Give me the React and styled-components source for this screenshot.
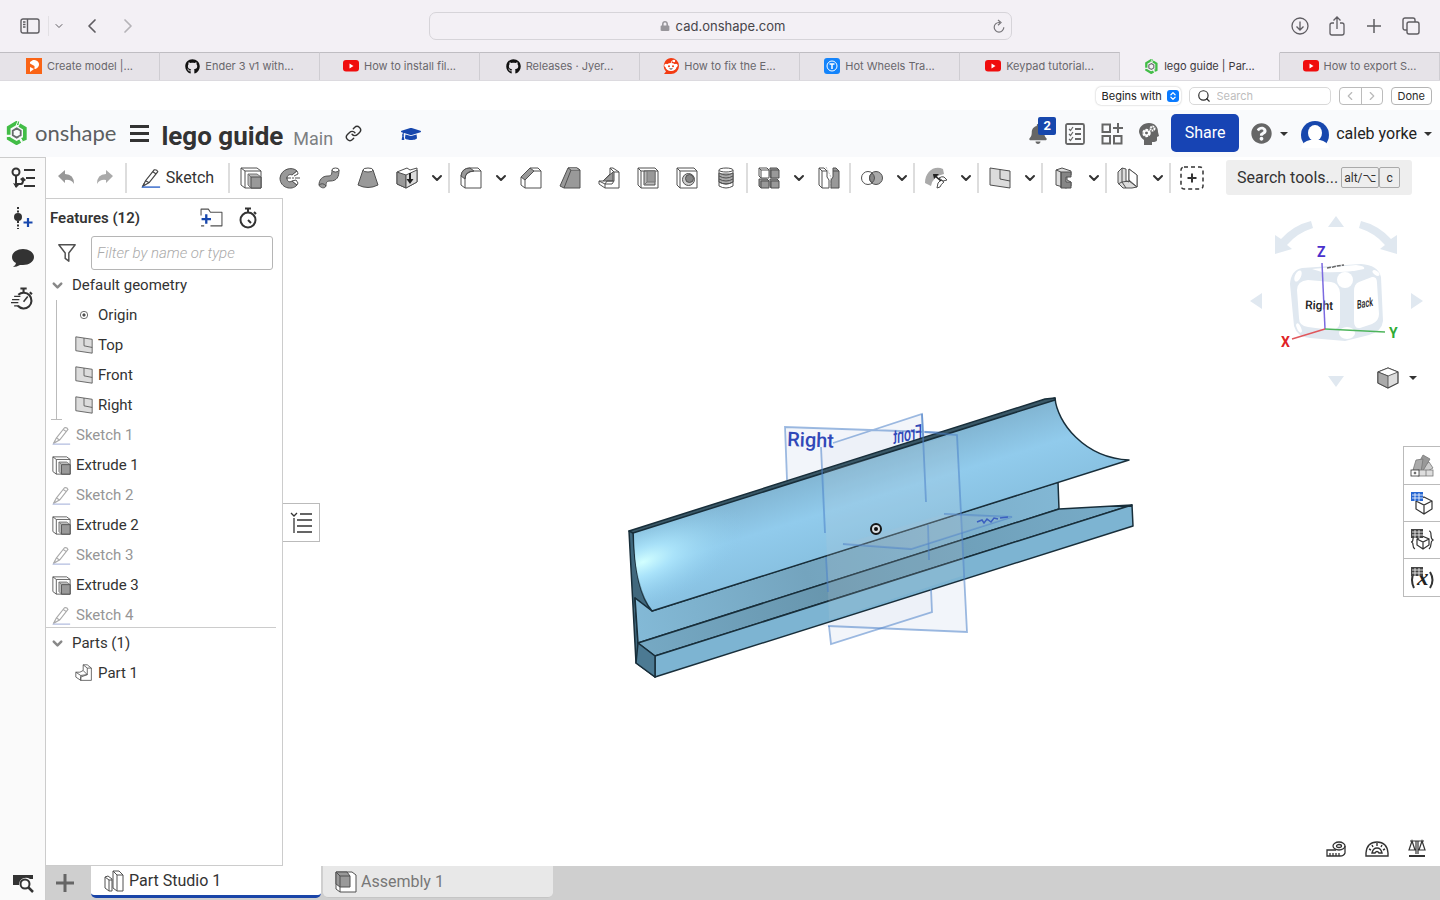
import { useState } from "react";
import styled, { createGlobalStyle } from "styled-components";
import { ChevronLeft, ChevronRight, ChevronDown, Link, Search, ChevronsUpDown } from "lucide-react";
import { FaGithub, FaBell, FaGraduationCap, FaQuestionCircle, FaLock } from "react-icons/fa";

const GlobalStyle = createGlobalStyle`
  * { box-sizing: border-box; }
  body {
    margin: 0;
    background: #fff;
    color: #333;
    font-family: Roboto, "Liberation Sans", sans-serif;
    font-size: 16px;
  }
  button {
    padding: 0;
    border: 0;
    background: none;
    color: inherit;
    font: inherit;
    cursor: pointer;
  }
  ul { list-style: none; margin: 0; padding: 0; }
  svg { display: block; flex-shrink: 0; }
`;

const Page = styled.div`
  display: flex;
  flex-direction: column;
  min-height: 100vh;
`;

/* ---------- browser ---------- */

const BrowserBar = styled.header`
  display: flex;
  align-items: center;
  justify-content: space-between;
  height: 52px;
  padding: 0 17px 0 18px;
  background: #f3f0f5;
  color: #5f5d62;
  font-family: Inter, "Liberation Sans", sans-serif;
`;

const BrowserGroup = styled.div`
  display: flex;
  flex: 1;
  align-items: center;
  justify-content: ${(props) => (props.$end ? "flex-end" : "flex-start")};
  gap: ${(props) => (props.$end ? "13px" : "12px")};
`;

const BrowserButton = styled.button`
  display: flex;
  align-items: center;
  justify-content: center;
  width: 24px;
  height: 28px;
  color: ${(props) => (props.$faded ? "#b5b3b8" : "#5f5d62")};
`;

const SmallMenu = styled(BrowserButton)`
  height: 20px;
  width: 20px;
  margin-left: -6px;
  border-left: 1px solid #e2e0e4;
`;

const AddressBar = styled.div`
  display: flex;
  align-items: center;
  width: 583px;
  height: 28px;
  padding-left: 28px;
  border: 1px solid #d6d4d9;
  border-radius: 7px;
  font-size: 13px;
  color: #47454a;
`;

const Address = styled.div`
  display: flex;
  flex: 1;
  align-items: center;
  justify-content: center;
  gap: 6px;
  svg { color: #98969b; }
`;

const TabStrip = styled.nav`
  display: flex;
  height: 29px;
  border-bottom: 1px solid #dcdadf;
  font-family: Inter, "Liberation Sans", sans-serif;
  font-size: 11px;
`;

const BrowserTab = styled.a`
  display: flex;
  flex: 1;
  align-items: center;
  justify-content: center;
  gap: 5px;
  padding-bottom: 1px;
  border-top: 1px solid ${(props) => (props.$active ? "#f3f0f5" : "#bfbdc2")};
  border-right: 1px solid #cfcdd2;
  background: ${(props) => (props.$active ? "#f3f0f5" : "#e6e3e8")};
  color: ${(props) => (props.$active ? "#3b393e" : "#69676c")};
  text-decoration: none;
  white-space: nowrap;
`;

const FindBar = styled.form`
  display: flex;
  align-items: center;
  justify-content: flex-end;
  gap: 8px;
  height: 29px;
  padding: 0 8px;
  background: #fff;
  color: #2b2b2b;
  font-family: Inter, "Liberation Sans", sans-serif;
  font-size: 11px;
`;

const MatchMode = styled.label`
  display: flex;
  position: relative;
  align-items: center;
  height: 18px;
  border-radius: 5px;
  box-shadow: 0 0 2px rgba(0, 0, 0, 0.3);
  select {
    appearance: none;
    width: 85px;
    height: 18px;
    padding: 0 18px 0 6px;
    border: 0;
    background: none;
    color: #222;
    font: inherit;
  }
`;

const Stepper = styled.span`
  display: flex;
  position: absolute;
  right: 2px;
  align-items: center;
  justify-content: center;
  width: 12px;
  height: 12px;
  border-radius: 3px;
  background: #0a7bff;
  color: #fff;
  pointer-events: none;
`;

const FindBox = styled.label`
  display: flex;
  align-items: center;
  gap: 6px;
  width: 142px;
  height: 18px;
  padding-left: 7px;
  border: 1px solid #d9d9d9;
  border-radius: 5px;
  input {
    width: 100px;
    padding: 0;
    border: 0;
    background: none;
    font: inherit;
    outline: 0;
  }
  input::placeholder { color: #bdbdbd; }
`;

const Segmented = styled.div`
  display: flex;
  height: 18px;
  border: 1px solid #bcbcbc;
  border-radius: 4px;
  color: #b9b9b9;
  button {
    display: flex;
    align-items: center;
    justify-content: center;
    width: 21px;
  }
  button + button { border-left: 1px solid #bcbcbc; }
`;

const DoneButton = styled.button`
  height: 18px;
  padding: 0 6px;
  border: 1px solid #b5b5b5;
  border-radius: 4px;
`;

/* ---------- document header ---------- */

const DocHeader = styled.header`
  display: flex;
  align-items: center;
  height: 47px;
  padding: 0 8px 0 5px;
  background: #f9fafc;
`;

const Brand = styled.a`
  display: flex;
  align-items: center;
  gap: 6px;
  height: 44px;
  padding-bottom: 2px;
  color: #5c5f61;
  font-family: Lato, "Liberation Sans", sans-serif;
  font-size: 22px;
  line-height: 24px;
  text-decoration: none;
`;

const Hamburger = styled.button`
  display: flex;
  flex-direction: column;
  gap: 4px;
  width: 19px;
  margin: 0 12px 0 14px;
  span { height: 3px; background: #333; }
`;

const DocTitle = styled.h1`
  margin: 4px 10px 0 0;
  font-size: 26px;
  font-weight: 700;
  line-height: 30px;
`;

const Workspace = styled.span`
  margin: 10px 2px 0 0;
  color: #7d7f82;
  font-size: 18px;
  line-height: 22px;
`;

const HeaderButton = styled.button`
  display: flex;
  position: relative;
  align-items: center;
  justify-content: center;
  width: 37px;
  height: 30px;
  color: ${(props) => props.$color || "#666"};
`;

const HatButton = styled(HeaderButton)`
  margin-left: 20px;
`;

const HeaderTools = styled.div`
  display: flex;
  align-items: center;
  margin-left: auto;
`;

const Badge = styled.span`
  position: absolute;
  top: -2px;
  right: 0;
  width: 18px;
  height: 18px;
  border-radius: 2px;
  background: #1747ad;
  color: #fff;
  font-size: 13px;
  font-weight: 700;
  line-height: 18px;
`;

const ShareButton = styled.button`
  width: 68px;
  height: 38px;
  margin: 0 4px 2px;
  border-radius: 5px;
  background: #1744b4;
  color: #fff;
  font-size: 16px;
`;

const Account = styled.button`
  display: flex;
  align-items: center;
  gap: 7px;
  margin-left: 13px;
  color: #222;
`;

const Caret = styled.span`
  border: 4px solid transparent;
  border-top-color: #333;
  border-bottom: 0;
`;

/* ---------- workspace ---------- */

const Body = styled.div`
  display: flex;
  flex: 1;
`;

const Rail = styled.nav`
  display: flex;
  flex-direction: column;
  width: 46px;
  border-top: 1px solid #ccc;
  border-right: 1px solid #ccc;
  background: #fafafa;
`;

const RailButton = styled.button`
  display: flex;
  align-items: center;
  justify-content: center;
  height: 40px;
  ${(props) => props.$last && "margin-top: auto; height: 34px;"}
`;

const Studio = styled.div`
  display: flex;
  flex: 1;
  flex-direction: column;
  min-width: 0;
`;

const Toolbar = styled.div`
  display: flex;
  align-items: center;
  height: 41px;
`;

const ToolButton = styled.button`
  display: flex;
  align-items: center;
  justify-content: center;
  width: 39px;
  height: 36px;
`;

const MoreButton = styled(ToolButton)`
  width: 21px;
`;

const SketchButton = styled(ToolButton)`
  gap: 5px;
  width: 99px;
`;

const Divider = styled.span`
  width: 2px;
  height: 30px;
  margin: 0 1px;
  background: #ddd;
`;

const ToolSearch = styled.button`
  display: flex;
  align-items: center;
  height: 35px;
  margin-left: 15px;
  padding: 0 12px 0 11px;
  border-radius: 3px;
  background: #eee;
  white-space: nowrap;
`;

const Key = styled.kbd`
  height: 21px;
  padding: 0 ${(props) => (props.$wide ? "2px" : "6px")};
  border: 1px solid #aaa;
  border-radius: 2px;
  font-family: Roboto, "DejaVu Sans", sans-serif;
  font-size: 12px;
  line-height: 20px;
  &:first-of-type { margin-left: 3px; }
`;

const Main = styled.main`
  display: flex;
  flex: 1;
`;

const FeaturePanel = styled.aside`
  width: 237px;
  border-top: 1px solid #ccc;
  border-right: 1px solid #ccc;
  border-bottom: 1px solid #ccc;
  font-size: 15px;
`;

const PanelHead = styled.div`
  display: flex;
  align-items: center;
  height: 37px;
  padding: 0 24px 0 4px;
  h2 {
    flex: 1;
    margin: 0;
    font-size: 15px;
    font-weight: 600;
  }
  button + button { margin-left: 13px; }
`;

const FilterRow = styled.label`
  display: flex;
  align-items: center;
  gap: 14px;
  padding: 0 10px 0 11px;
  input {
    width: 182px;
    height: 34px;
    padding: 0 5px;
    border: 1px solid #b5b5b5;
    border-radius: 3px;
    font: inherit;
    outline: 0;
  }
  input::placeholder {
    color: #aaa;
    font-style: italic;
    font-weight: 300;
  }
`;

const FeatureList = styled.ul`
  max-height: 358px;
  margin-right: 6px;
  overflow: hidden;
  border-bottom: 1px solid #ccc;
`;

const Row = styled.li`
  display: flex;
  align-items: center;
  gap: 5px;
  height: 30px;
  padding-left: ${(props) => (props.$nested ? "18px" : "6px")};
  color: ${(props) => (props.$muted ? "#969696" : "#333")};
`;

const Fold = styled.button`
  display: flex;
  align-items: center;
  gap: 7px;
  height: 30px;
  padding-left: 4px;
`;

const Branch = styled.ul`
  position: relative;
  margin-left: 10px;
  border-left: ${(props) => (props.$line ? "1px solid #bbb" : "1px solid transparent")};
  &::after {
    content: "";
    display: ${(props) => (props.$line ? "block" : "none")};
    position: absolute;
    bottom: 0;
    left: -6px;
    width: 11px;
    height: 1px;
    background: #bbb;
  }
`;

const Viewport = styled.section`
  display: flex;
  position: relative;
  flex: 1;
  min-width: 0;
  overflow: hidden;
`;

const Scene = styled.svg`
  flex: 1;
  width: 100%;
  min-width: 0;
`;

const ListToggle = styled.button`
  display: flex;
  position: absolute;
  top: 305px;
  left: -1px;
  align-items: center;
  justify-content: center;
  width: 38px;
  height: 39px;
  border: 1px solid #bbb;
  border-left-color: #fff;
  background: #fff;
`;

const CubeArea = styled.div`
  position: absolute;
  top: 7px;
  right: 0;
`;

const ViewMenu = styled.button`
  display: flex;
  position: absolute;
  right: 23px;
  bottom: 6px;
  align-items: center;
  gap: 10px;
`;

const SideTabs = styled.div`
  display: flex;
  position: absolute;
  top: 248px;
  right: 0;
  flex-direction: column;
  border: 1px solid #bbb;
  border-right: 0;
  background: #fff;
  button {
    display: flex;
    align-items: center;
    justify-content: center;
    width: 36px;
    height: 38px;
  }
  button + button { border-top: 1px solid #bbb; }
  button:not(:last-child) { height: 37px; }
`;

const MeasureBar = styled.div`
  display: flex;
  position: absolute;
  right: 14px;
  bottom: 7px;
  gap: 19px;
`;

const StudioTabs = styled.nav`
  display: flex;
  height: 34px;
  background: #cfcfcf;
`;

const AddTab = styled.button`
  display: flex;
  align-items: center;
  justify-content: center;
  width: 45px;
  padding-right: 7px;
  color: #666;
`;

const StudioTab = styled.button`
  display: flex;
  align-items: center;
  gap: 4px;
  width: 230px;
  height: 32px;
  margin-right: 2px;
  padding-left: 12px;
  border-bottom: ${(props) => (props.$active ? "3px solid #1a45a8" : "1px solid #c5c5c5")};
  border-radius: 0 0 5px 5px;
  background: ${(props) => (props.$active ? "#fff" : "#e8e8e8")};
  color: ${(props) => (props.$active ? "#333" : "#777")};
`;

/* ---------- icons ---------- */

const ink = "#505050";

function Icon({ size = 22, children }) {
  return (
    <svg width={size} height={size} viewBox="0 0 22 22" fill="none" stroke={ink} strokeWidth="1" strokeLinejoin="round" aria-hidden="true">
      {children}
    </svg>
  );
}

function OnshapeMark({ size }) {
  return (
    <svg width={size} height={size} viewBox="0 0 24 26" fill="none" strokeWidth="4" aria-hidden="true">
      <path d="M14 2.500L11.500 2 3 7v8" stroke="#42bd47" />
      <path d="M3 17v2l8.500 5 4-2.300" stroke="#42bd47" />
      <path d="M14.500 4.500L20.500 8v11l-3.500 1.500" stroke="#42bd47" />
      <path d="M11.700 8l4.300 2.500v5l-4.300 2.500-4.300-2.500v-5z" stroke="#686b6d" strokeWidth="2" />
      <path d="M13 0l-2 5M1 17l5-1M18 22l-3-5" stroke="#fff" strokeWidth="1" />
    </svg>
  );
}

const YoutubeMark = () => (
  <svg width="16" height="12" viewBox="0 0 16 12" aria-hidden="true">
    <rect width="16" height="11.500" rx="3" fill="#f00d0d" />
    <path d="M6.500 3.500v5l4-2.500z" fill="#fff" />
  </svg>
);

const PrintablesMark = () => (
  <svg width="16" height="16" viewBox="0 0 16 16" aria-hidden="true">
    <rect width="16" height="16" fill="#fa6416" />
    <path d="M4 4l3-2c4 0 6 2 6 4.500S10.500 11 8.500 11V8L4 5.500z" fill="#fff" />
    <path d="M4 9l4 2-4 3z" fill="#fff" />
  </svg>
);

const RedditMark = () => (
  <svg width="16" height="16" viewBox="0 0 16 16" aria-hidden="true">
    <path d="M8 0a8 8 0 110 16H1l2-2.500A8 8 0 018 0z" fill="#f33b12" />
    <circle cx="3" cy="7.500" r="1.700" fill="#fff" />
    <circle cx="13" cy="7.500" r="1.700" fill="#fff" />
    <circle cx="11" cy="3" r="1.200" fill="#fff" />
    <path d="M8 5.500L9 2.800l2 .3" stroke="#fff" strokeWidth=".8" fill="none" />
    <ellipse cx="8" cy="9" rx="5.500" ry="4" fill="#fff" />
    <circle cx="6" cy="8.300" r="1" fill="#f33b12" />
    <circle cx="10" cy="8.300" r="1" fill="#f33b12" />
    <path d="M6 10.500h4q-2 2.200-4 0z" fill="#222" />
  </svg>
);

const ThingMark = () => (
  <svg width="16" height="16" viewBox="0 0 16 16" aria-hidden="true">
    <rect width="16" height="16" rx="3" fill="#1484fb" />
    <circle cx="8" cy="8" r="5" fill="none" stroke="#fff" />
    <path d="M5.500 6h5M8 6v5" stroke="#fff" strokeWidth="1.500" />
  </svg>
);

const SketchIcon = ({ size, faded }) => (
  <svg width={size} height={size} viewBox="0 0 22 22" fill="none" stroke={faded ? "#aaa" : "#444"} strokeWidth="1.300" aria-hidden="true">
    <path d="M2 20l3-6L14.500 2q3-.5 4 2L9 16z" />
    <path d="M5 14l4 2.200M13 4l3.700 2.500M2 20l1.500-3" />
    <path d="M1 21h20" stroke={faded ? "#b5bfe0" : "#2a60c8"} strokeWidth="1.500" />
  </svg>
);

const ExtrudeIcon = ({ size }) => (
  <Icon size={size}>
    <path d="M1 1h16l4 3v17H5l-4-3z" fill="#fff" />
    <path d="M1 1l4 3h16M5 4v17" />
    <path d="M8 7h9l4 3v11H11l-3-3z" fill="#bbb" stroke="#777" />
    <path d="M11 10h10v11H11z" fill="#999" />
    <path d="M8 7l3 3" stroke="#777" />
  </Icon>
);

const RevolveIcon = () => (
  <Icon>
    <path d="M18 4C13-1 2 2 1 11c0 10 12 13 17 7l-5-4c-3 2-5 0-5-3s3-4 5-3z" fill="#999" />
    <path d="M13 8l5-4q1 2 1 3l-4 2M13 14l4-1 2 3-1 2z" fill="#fff" />
    <path d="M7 11h14" strokeDasharray="5 1 2 1" />
  </Icon>
);

const SweepIcon = () => (
  <Icon>
    <path d="M14 3c0 5-1 6-4 6-6 0-9 4-9 9 1 3 6 4 7 1 0-4 1-5 4-5 7 0 9-4 9-11z" fill="#999" />
    <ellipse cx="17.500" cy="3" rx="3.500" ry="2" fill="#fff" />
    <path d="M1 18q4-3 7 1" />
  </Icon>
);

const LoftIcon = () => (
  <Icon>
    <path d="M6 3L1 18q10 5 20 0L16 3z" fill="#999" />
    <ellipse cx="11" cy="3" rx="5" ry="2" fill="#fff" />
  </Icon>
);

const ThickenIcon = () => (
  <Icon>
    <path d="M1 5l10-4 3 2 7-2v14l-11 6-9-4z" fill="#fff" />
    <path d="M1 5l9 3v13l-9-4z" fill="#999" />
    <path d="M10 8l11-5v12l-11 6z" fill="#ddd" />
    <path d="M14 6v8" stroke="#222" strokeWidth="2" />
    <path d="M10.500 12h7L14 17z" fill="#222" stroke="none" />
  </Icon>
);

const FilletIcon = () => (
  <Icon>
    <path d="M1 9Q2 1 10 1h8l3 3v17H5l-4-3z" fill="#fff" />
    <path d="M1 9Q2 1 10 1l4 3q-9 1-9 8z" fill="#999" />
    <path d="M5 21v-9q0-8 9-8h7" />
  </Icon>
);

const ChamferIcon = () => (
  <Icon>
    <path d="M1 10l9-9h8l3 3v17H5l-4-3z" fill="#fff" />
    <path d="M1 10l9-9 4 3-9 9z" fill="#999" />
    <path d="M5 21v-8l9-9h7" />
  </Icon>
);

const DraftIcon = () => (
  <Icon>
    <path d="M9 1h9l3 2v18H5l-4-2z" fill="#999" />
    <path d="M9 1h9l3 2h-9z" fill="#fff" />
    <path d="M12 3L5 21" />
  </Icon>
);

const RibIcon = () => (
  <Icon>
    <path d="M12 1h3l6 4v16H7l-6-4v-3h4l7-7z" fill="#fff" />
    <path d="M5 14L15 5v9z" fill="#999" />
    <path d="M12 1l4 4h5M16 5v9H9l-2 3v4M1 14l6 3h7l2-3" />
  </Icon>
);

const ShellIcon = () => (
  <Icon>
    <path d="M1 1h17l3 3v17H4l-3-3z" fill="#fff" />
    <path d="M1 1l3 3h17M4 4v17" />
    <path d="M7 4h11v14H7z" fill="#bbb" />
    <path d="M10 4h8v11h-8z" fill="#999" stroke="#777" />
    <path d="M7 18l3-3" stroke="#777" />
  </Icon>
);

const HoleIcon = () => (
  <Icon>
    <path d="M1 1h17l3 3v17H4l-3-3z" fill="#fff" />
    <path d="M1 1l3 3h17M4 4v17" />
    <circle cx="12.500" cy="12.500" r="6" fill="#ccc" />
    <circle cx="13.500" cy="11.500" r="4" fill="#858585" />
  </Icon>
);

const ThreadIcon = () => (
  <Icon>
    <path d="M4 3v16q7 4 14 0V3" fill="#fff" />
    <path d="M4 6v9q7 4 14 0V6" fill="#aaa" />
    <ellipse cx="11" cy="3" rx="7" ry="2" fill="#fff" />
    <path d="M4 6q7 4 14 0M4 9q7 4 14 0M4 12q7 4 14 0M4 15q7 4 14 0" />
  </Icon>
);

const PatternIcon = () => (
  <Icon>
    <path d="M1 1h8l2 2v8H3L1 9z" fill="#fff" />
    <path d="M12 1h7l2 2v8h-8l-1-2zM1 12h8l2 2v7H3l-2-2zM12 12h7l2 2v7h-8l-1-2z" fill="#999" />
    <path d="M1 1l2 2h8M3 3v8M13 3h8M13 3v8M3 14h8M3 14v7M13 14h8M13 14v7" />
  </Icon>
);

const MirrorIcon = () => (
  <Icon>
    <path d="M1 1h5l3 3v6l2 3v8H4l-3-3z" fill="#fff" />
    <path d="M1 1l3 3h5M4 4v17" />
    <path d="M8 0l5 10v12" stroke="#bbb" strokeDasharray="2 1" />
    <path d="M21 4v17h-8v-8l2-3V1h3z" fill="#999" />
    <path d="M15 4h6" />
  </Icon>
);

const BooleanIcon = () => (
  <Icon>
    <circle cx="7" cy="11" r="6.500" fill="#fff" />
    <circle cx="15" cy="11" r="6.500" fill="#aaa" />
    <path d="M11 6q-5 5 0 10 5-5 0-10z" fill="#888" />
  </Icon>
);

const SurfaceIcon = () => (
  <Icon>
    <path d="M0 16C0 5 9-2 18 2l1 5Q8 9 6 19z" fill="#aaa" stroke="none" />
    <path d="M12 21q0-6 4-8l3 2q-3 2-4 5zM14 11q3-2 5-1l3 3-4 1z" fill="#fff" />
    <path d="M9 8l7 6" stroke="#222" strokeWidth="1.600" />
    <path d="M8 7h6l-5 5z" fill="#222" stroke="none" />
  </Icon>
);

const PlaneIcon = ({ size }) => (
  <Icon size={size}>
    <path d="M1 1l20 3v17L1 18z" fill="#dcdcdc" />
    <path d="M11 2.500V12l10 2" />
  </Icon>
);

const FrameIcon = () => (
  <Icon>
    <path d="M3 3l6-2 9 3v4l-4 1v4l4 2v4l-5 2-10-3z" fill="#ddd" />
    <path d="M8 5h10v5h-5v5h5v6H8z" fill="#858585" />
    <path d="M3 3l5 2v16" />
  </Icon>
);

const SheetIcon = () => (
  <Icon>
    <path d="M1 5l4-4 4 1v12l3 1V2l8 6v12l-5 1H6l-5-5z" fill="#ddd" />
    <path d="M12 2l8 6v12l-8-7z" fill="#fff" />
    <path d="M5 1v14l-4 2M5 15l7-1 8 6M5 15l4 6" />
  </Icon>
);

const AddToolIcon = () => (
  <svg width="24" height="24" viewBox="0 0 24 24" fill="none" stroke="#333" aria-hidden="true">
    <rect x="1" y="1" width="22" height="22" rx="3" strokeWidth="1.500" strokeDasharray="4 3" />
    <path d="M12 7.500v9M7.500 12h9" strokeWidth="2" />
  </svg>
);

const UndoIcon = ({ flip }) => (
  <svg width="18" height="18" viewBox="0 0 18 18" fill={flip ? "#aaa" : "#999"} aria-hidden="true">
    <path d={flip ? "M17 7l-7-6v4Q1 5 1 15q3-5 9-4v3z" : "M1 7l7-6v4q9 0 9 10-3-5-9-4v3z"} />
  </svg>
);

const StopwatchIcon = ({ speed, size = 22 }) => (
  <svg width={size} height={size} viewBox="0 0 22 22" fill="none" stroke="#333" strokeWidth="2" aria-hidden="true">
    {speed ? <path d="M7 7.500a7.500 7.500 0 11-.5 10.500" /> : <circle cx="12" cy="13" r="7.500" />}
    <path d="M9 1.500h6M12 2v3M18 5l2 2" />
    {speed ? <path d="M12 14l4-5" strokeWidth="1.500" /> : <path d="M12 13l3 3" strokeWidth="2" />}
    {speed && <path d="M3 9h6M1 12h7M0 15h7M3 18h4" strokeWidth="1.200" />}
  </svg>
);

const PartIcon = () => (
  <Icon size={18}>
    <path d="M10 1h5l5 4v15H7l-6-4v-6h5l4-2z" fill="#fff" />
    <path d="M10 1l5 4h5M15 5v8l-8 3v4M1 10l6 4v6M7 14l8-1M10 8l5 5" />
  </Icon>
);

const PartStudioIcon = () => (
  <Icon>
    <path d="M2 7l3-1 4 3v12H6l-4-3z" fill="#fff" />
    <path d="M10 1h6l4 4v16h-6l-4-3z" fill="#fff" />
    <path d="M2 7l4 3v11M6 10h3M10 1l4 4v16M14 5h6" />
  </Icon>
);

const AssemblyIcon = () => (
  <Icon>
    <path d="M1 1h16l4 3v17H5l-4-3z" fill="#fff" />
    <path d="M1 1h11l3 4v11H5l-4-3z" fill="#999" />
    <path d="M1 1l4 4h10M5 5v16" />
  </Icon>
);

const HouseCube = () => (
  <svg width="22" height="22" viewBox="0 0 22 22" strokeLinejoin="round" stroke="#444" aria-hidden="true">
    <path d="M11 1l10 4v11l-10 5-10-5V5z" fill="#ddd" strokeWidth="1.300" />
    <path d="M1 5l10 4 10-4-10-4z" fill="#fff" strokeWidth=".8" />
    <path d="M11 9v12L1 16V5z" fill="#aaa" strokeWidth=".8" />
  </svg>
);

const Grid = ({ color }) => (
  <g>
    <path d="M1 1h12v9H1z" fill={color} stroke="none" />
    <path d="M2 4h11M2 7h11M5 2v8M9 2v8" stroke="#fff" strokeWidth=".8" />
  </g>
);

const SwatchIcon = () => (
  <svg width="24" height="24" viewBox="0 0 24 24" fill="#aaa" stroke="#777" strokeWidth=".8" aria-hidden="true">
    <path d="M6 16L19 8l4 6-12 7z" fill="#ccc" />
    <path d="M5 16L13 1l7 4-9 15z" fill="#999" />
    <path d="M3 16L6 6l7-1-2 13z" fill="#aaa" />
    <rect x="8" y="16" width="15" height="6" fill="#ddd" />
    <path d="M16 16v6" />
    <rect x="1" y="16" width="8" height="6" fill="#fff" stroke="#333" />
    <circle cx="5" cy="19" r="1" fill="#333" />
  </svg>
);

const TableCubeIcon = ({ color, braces }) => (
  <svg width="24" height="24" viewBox="0 0 24 24" fill="none" stroke="#333" strokeWidth="1.200" aria-hidden="true">
    {braces ? (
      <g>
        <path d="M5 8q-2 0-2 3t-2 3q2 0 2 3t2 4M19 3q2 0 2 4t2 5q-2 1-2 4t-2 5" />
        <path d="M12 8l7 3v6l-6 4-6-4v-6zM7 11l6 3 6-3M13 14v7" fill="#fff" />
      </g>
    ) : (
      <path d="M14 6l8 4v8l-8 5-8-5v-8zM6 10l8 4 8-4M14 14v9" fill="#fff" />
    )}
    <Grid color={color} />
  </svg>
);

const VariableIcon = () => (
  <svg width="24" height="24" viewBox="0 0 24 24" fill="none" stroke="#333" aria-hidden="true">
    <text x="7" y="19" fill="#222" stroke="none" fontFamily="Liberation Serif, serif" fontSize="23" fontStyle="italic" fontWeight="700">x</text>
    <path d="M4 6q-4 8 0 16M20 6q5 8 0 16" strokeWidth="2" />
    <Grid color="#444" />
  </svg>
);

/* ---------- scene ---------- */

const edge = { stroke: "#182e3a", strokeWidth: 1.5, strokeLinejoin: "round" };
const planeEdge = { fill: "none", stroke: "#4d82c8", strokeOpacity: 0.55, strokeWidth: 1.8 };

function Model() {
  return (
    <Scene viewBox="283 198 1157 668" preserveAspectRatio="xMidYMid meet" role="img" aria-label="Part 1">
      <defs>
        <linearGradient id="lip" gradientUnits="userSpaceOnUse" x1="840" y1="462" x2="866" y2="546">
          <stop offset="0" stopColor="#80b3d0" />
          <stop offset="0.5" stopColor="#91cbec" />
          <stop offset="1" stopColor="#88c1e1" />
        </linearGradient>
        <radialGradient id="shine" gradientUnits="userSpaceOnUse" cx="0" cy="0" r="1" gradientTransform="translate(643 562) rotate(-22) scale(110 46)">
          <stop offset="0" stopColor="#d2ffff" />
          <stop offset="0.3" stopColor="#b0e9fe" stopOpacity="0.8" />
          <stop offset="1" stopColor="#8ccbec" stopOpacity="0" />
        </radialGradient>
        <linearGradient id="wall" gradientUnits="userSpaceOnUse" x1="636" y1="620" x2="1058" y2="495">
          <stop offset="0" stopColor="#83b9d6" />
          <stop offset="0.4" stopColor="#74a4be" />
          <stop offset="1" stopColor="#82b7d4" />
        </linearGradient>
        <linearGradient id="ledge" gradientUnits="userSpaceOnUse" x1="640" y1="650" x2="1110" y2="505">
          <stop offset="0" stopColor="#76a9c4" />
          <stop offset="0.4" stopColor="#6896ae" />
          <stop offset="1" stopColor="#77abc7" />
        </linearGradient>
      </defs>

      {/* planes behind the part */}
      <path d="M785 427L957 433 967 632 795 625z" fill="#e9eef6" fillOpacity="0.6" />
      <path d="M821 447L922 414 932 612 831 644z" fill="#e9eef6" fillOpacity="0.6" />
      <path d="M787 480L785 427 957 433M833 443L922 414 924 450" {...planeEdge} />
      <text x="787" y="446" fill="#3048b8" fontSize="20" fontWeight="500" transform="rotate(2 787 446)">Right</text>
      <text transform="matrix(-0.62 0.13 0 1 922 438)" fill="#3048b8" fontSize="20" fontWeight="500">Front</text>

      {/* part */}
      <path d="M629 531L633 531 652 611 635 598 638 643 655 656 655 677 636 663z" fill="#41687d" {...edge} />
      <path d="M635 598L652 611 1058 482 1059 509 638 643z" fill="url(#wall)" {...edge} />
      <path d="M638 643L1059 509 1132 505 655 656z" fill="url(#ledge)" {...edge} />
      <path d="M655 656L1132 505 1133 526 655 677z" fill="#7db4d2" {...edge} />
      <path d="M638 643L655 656 655 677 636 663z" fill="#4c7a93" {...edge} />
      <path d="M633 531L1055 398C1057 422 1084 458 1129 460L652 611C638 595 634 560 633 531z" fill="url(#lip)" {...edge} />
      <path d="M634 532L800 480V562L652 610C638 595 634 560 634 532z" fill="url(#shine)" />
      <path d="M629 531L1045 399 1055 398 1055 400 633 533z" fill="#3a5867" {...edge} />

      {/* planes in front of the part */}
      <path d="M824 472L956 434 965 575 829 620z" fill="#c3cdd6" fillOpacity="0.16" />
      <path d="M821 447L825 533M826 557L828 592M829 626L831 644 932 612 931 589M922 414L926 502M928 525L929 560" {...planeEdge} />
      <path d="M925 432L957 435 967 632 828 626" {...planeEdge} />
      <path d="M843 544L911 549 1012 517 944 514" {...planeEdge} />
      <path d="M843 544L911 549 1012 517 944 514z" fill="#b4c2cd" fillOpacity="0.15" />
      <path d="M977 522l5-2 2 3 3-4 4 3 3-4 4 1M1000 518l8-1" stroke="#3b5fc0" strokeWidth="1.500" fill="none" />
      <circle cx="876" cy="529" r="5" fill="#d9dde0" stroke="#151515" strokeWidth="2" />
      <circle cx="876" cy="529" r="2" fill="#111" />
    </Scene>
  );
}

function ViewCube() {
  return (
    <svg width="210" height="190" viewBox="0 0 210 190" aria-hidden="true">
      <g fill="#e0e8f0">
        <path d="M106 11l8 11H98zM98 171h16l-8 11zM20 96l12-8v16zM193 96l-12-8v16z" />
        <path d="M81 16l2 7Q67 28 57 40l5 4-17 5V30l6 4Q64 20 81 16z" />
        <path d="M131 16l-2 7q16 5 26 17l-5 4 17 5V30l-6 4Q148 20 131 16z" />
        <path d="M72 63L131 59Q148 60 151 72L153 116Q152 126 139 130L115 136 80 133Q67 132 64 121L60 79Q61 65 72 63z" />
      </g>
      <g fill="#fff">
        <path d="M78 75L101 77Q109 78 110 88V117Q109 125 101 125L78 122Q69 121 69 113L67 85Q67 76 78 75z" />
        <path d="M129 77L142 72Q147 71 147 78L149 109Q149 116 142 119L130 123Q124 124 124 116V86Q124 79 129 77z" />
        <path d="M82 64L126 60Q136 61 134 64 116 68 92 67z" />
        <circle cx="115" cy="75" r="8" />
        <ellipse cx="117" cy="128" rx="8" ry="6" />
        <ellipse cx="68" cy="71" rx="3" ry="6" transform="rotate(25 68 71)" />
        <ellipse cx="69" cy="123" rx="2" ry="5" transform="rotate(-25 69 123)" />
        <ellipse cx="146" cy="68" rx="4" ry="2" transform="rotate(35 146 68)" />
      </g>
      <path d="M97 63l6-1 4-1 7-1" stroke="#666" strokeWidth="1.500" strokeDasharray="4 1" fill="none" />
      <g fontSize="12" fontWeight="500" fill="#222">
        <text x="75" y="104" transform="rotate(2 75 104)">Right</text>
        <text x="0" y="0" fontSize="12" transform="matrix(0.6 -0.120 0 1 127 104)">Back</text>
      </g>
      <path d="M92 58L95 124" stroke="#7b6ae0" strokeWidth="1.500" />
      <path d="M95 124L62 134" stroke="#e0575c" strokeWidth="1.500" />
      <path d="M95 124L155 127" stroke="#4eb55c" strokeWidth="1.500" />
      <g fontSize="14" fontWeight="700">
        <text x="87" y="52" fill="#4a31cc">Z</text>
        <text x="51" y="142" fill="#e02226">X</text>
        <text x="159" y="133" fill="#2eab35">Y</text>
      </g>
    </svg>
  );
}

/* ---------- data ---------- */

const browserTabs = [
  { title: "Create model |...", icon: <PrintablesMark /> },
  { title: "Ender 3 v1 with...", icon: <FaGithub size={15} color="#111" /> },
  { title: "How to install fil...", icon: <YoutubeMark /> },
  { title: "Releases · Jyer...", icon: <FaGithub size={15} color="#111" /> },
  { title: "How to fix the E...", icon: <RedditMark /> },
  { title: "Hot Wheels Tra...", icon: <ThingMark /> },
  { title: "Keypad tutorial...", icon: <YoutubeMark /> },
  { title: "lego guide | Par...", icon: <OnshapeMark size={15} />, active: true },
  { title: "How to export S...", icon: <YoutubeMark /> },
];

const toolGroups = [
  [["Extrude", ExtrudeIcon], ["Revolve", RevolveIcon], ["Sweep", SweepIcon], ["Loft", LoftIcon], ["Thicken", ThickenIcon], ["More solids"]],
  [["Fillet", FilletIcon], ["More fillets"], ["Chamfer", ChamferIcon], ["Draft", DraftIcon], ["Rib", RibIcon], ["Shell", ShellIcon], ["Hole", HoleIcon], ["Thread", ThreadIcon]],
  [["Linear pattern", PatternIcon], ["More patterns"], ["Mirror", MirrorIcon]],
  [["Boolean", BooleanIcon], ["More booleans"]],
  [["Surface", SurfaceIcon], ["More surfaces"]],
  [["Plane", PlaneIcon], ["More planes"]],
  [["Frame", FrameIcon], ["More frames"]],
  [["Sheet metal", SheetIcon], ["More sheet metal"]],
  [["Add tool", AddToolIcon]],
];

const features = ["Sketch 1", "Extrude 1", "Sketch 2", "Extrude 2", "Sketch 3", "Extrude 3", "Sketch 4"];

function Browser() {
  return (
    <>
      <BrowserBar>
        <BrowserGroup>
          <BrowserButton aria-label="Sidebar">
            <svg width="20" height="16" viewBox="0 0 20 16" fill="none" stroke="currentColor" strokeWidth="1.400">
              <rect x="1" y="1" width="18" height="14" rx="2" />
              <path d="M7.500 1v14M3 4h2.500M3 6.500h2.500M3 9h2.500" />
            </svg>
          </BrowserButton>
          <SmallMenu aria-label="Tab groups"><ChevronDown size={12} /></SmallMenu>
          <BrowserButton aria-label="Back"><ChevronLeft size={24} strokeWidth={1.7} /></BrowserButton>
          <BrowserButton aria-label="Forward" $faded><ChevronRight size={24} strokeWidth={1.7} /></BrowserButton>
        </BrowserGroup>
        <AddressBar>
          <Address><FaLock size={10} />cad.onshape.com</Address>
          <BrowserButton aria-label="Reload">
            <svg width="12" height="14" viewBox="0 0 12 14" fill="none" stroke="#77757a" strokeWidth="1.200">
              <path d="M7 3.500H6a4.800 4.800 0 104.800 4.800M5 1l3 2.500-3 2.700" />
            </svg>
          </BrowserButton>
        </AddressBar>
        <BrowserGroup $end>
          <BrowserButton aria-label="Downloads">
            <svg width="18" height="18" viewBox="0 0 18 18" fill="none" stroke="currentColor" strokeWidth="1.300">
              <circle cx="9" cy="9" r="8" /><path d="M9 4.500v8.500M5.500 9.500L9 13l3.500-3.500" />
            </svg>
          </BrowserButton>
          <BrowserButton aria-label="Share page">
            <svg width="16" height="20" viewBox="0 0 16 20" fill="none" stroke="currentColor" strokeWidth="1.300">
              <path d="M5 7H3a2 2 0 00-2 2v8a2 2 0 002 2h10a2 2 0 002-2V9a2 2 0 00-2-2h-2M8 13V1M4.500 4.500L8 1l3.500 3.500" />
            </svg>
          </BrowserButton>
          <BrowserButton aria-label="New tab">
            <svg width="14" height="14" viewBox="0 0 14 14" fill="none" stroke="currentColor" strokeWidth="1.500"><path d="M7 0v14M0 7h14" /></svg>
          </BrowserButton>
          <BrowserButton aria-label="Tab overview">
            <svg width="18" height="18" viewBox="0 0 18 18" fill="none" stroke="currentColor" strokeWidth="1.400">
              <rect x="5" y="5" width="12" height="12" rx="2" /><path d="M5 13H3a2 2 0 01-2-2V3a2 2 0 012-2h8a2 2 0 012 2v2" />
            </svg>
          </BrowserButton>
        </BrowserGroup>
      </BrowserBar>
      <TabStrip>
        {browserTabs.map((tab) => (
          <BrowserTab href="#" key={tab.title} $active={tab.active}>
            {tab.icon}
            <span>{tab.title}</span>
          </BrowserTab>
        ))}
      </TabStrip>
      <FindBar onSubmit={(e) => e.preventDefault()}>
        <MatchMode>
          <select aria-label="Match mode"><option>Begins with</option></select>
          <Stepper><ChevronsUpDown size={10} strokeWidth={3} /></Stepper>
        </MatchMode>
        <FindBox>
          <Search size={14} />
          <input placeholder="Search" aria-label="Search" />
        </FindBox>
        <Segmented>
          <button type="button" aria-label="Previous match"><ChevronLeft size={14} /></button>
          <button type="button" aria-label="Next match"><ChevronRight size={14} /></button>
        </Segmented>
        <DoneButton>Done</DoneButton>
      </FindBar>
    </>
  );
}

function DocumentHeader() {
  return (
    <DocHeader>
      <Brand href="#"><OnshapeMark size={24} />onshape</Brand>
      <Hamburger aria-label="Menu"><span /><span /><span /></Hamburger>
      <DocTitle>lego guide</DocTitle>
      <Workspace>Main</Workspace>
      <HeaderButton aria-label="Link" $color="#333"><Link size={17} /></HeaderButton>
      <HatButton aria-label="Learning center" $color="#1747ad"><FaGraduationCap size={20} /></HatButton>
      <HeaderTools>
        <HeaderButton aria-label="Notifications"><FaBell size={20} /><Badge>2</Badge></HeaderButton>
        <HeaderButton aria-label="Tasks">
          <svg width="20" height="22" viewBox="0 0 20 22" fill="none" stroke="currentColor" strokeWidth="1.800">
            <rect x="1" y="1" width="18" height="20" rx="1.500" />
            <path d="M10 6h6M10 11h6M10 16h6" />
            <path d="M4 6l1.500 1.500L8 4M4 11l1.500 1.500L8 9M4 16l1.500 1.500L8 14" strokeWidth="1.200" />
          </svg>
        </HeaderButton>
        <HeaderButton aria-label="Apps">
          <svg width="22" height="22" viewBox="0 0 22 22" fill="none" stroke="currentColor" strokeWidth="2">
            <path d="M1.500 1.500h7.500v7.500H1.500zM1.500 13h7.500v7.500H1.500zM13 13h7.500v7.500H13zM17 0v10M12 5h10" />
          </svg>
        </HeaderButton>
        <HeaderButton aria-label="AI advisor">
          <svg width="20" height="22" viewBox="0 0 20 22" fill="currentColor">
            <path d="M10 0C16 0 19 4 19 9l1 4-2 1v3q0 2-5 2v3H5v-5Q1 14 0 9C0 4 4 0 10 0z" />
            <circle cx="7.500" cy="10" r="3" fill="none" stroke="#fff" strokeWidth="2.500" strokeDasharray="2.400 .8" />
            <circle cx="7.500" cy="10" r="2.200" fill="none" stroke="#fff" strokeWidth="1.500" />
            <circle cx="13.500" cy="5.500" r="2" fill="none" stroke="#fff" strokeWidth="2" strokeDasharray="1.500 .6" />
          </svg>
        </HeaderButton>
        <ShareButton>Share</ShareButton>
        <HeaderButton aria-label="Help"><FaQuestionCircle size={21} /></HeaderButton>
        <Caret />
        <Account>
          <svg width="28" height="28" viewBox="0 0 28 28">
            <circle cx="14" cy="15" r="14" fill="#1747ad" />
            <ellipse cx="14" cy="13" rx="7" ry="8" fill="#fff" />
            <path d="M0 28q2-7 9-8h10q7 1 9 8v2H0z" fill="#fff" />
          </svg>
          caleb yorke
          <Caret />
        </Account>
      </HeaderTools>
    </DocHeader>
  );
}

function ToolRow() {
  return (
    <Toolbar>
      <ToolButton aria-label="Undo"><UndoIcon /></ToolButton>
      <ToolButton aria-label="Redo"><UndoIcon flip /></ToolButton>
      <Divider />
      <SketchButton><SketchIcon size={20} />Sketch</SketchButton>
      {toolGroups.map((group, i) => [
        <Divider key={i} />,
        ...group.map(([name, Glyph]) =>
          Glyph ? (
            <ToolButton key={name} aria-label={name}><Glyph /></ToolButton>
          ) : (
            <MoreButton key={name} aria-label={name}><ChevronDown size={16} strokeWidth={3} /></MoreButton>
          )
        ),
      ])}
      <ToolSearch>Search tools...<Key $wide>alt/⌥</Key><Key>c</Key></ToolSearch>
    </Toolbar>
  );
}

function Features() {
  const [geometryOpen, setGeometryOpen] = useState(true);
  const [partsOpen, setPartsOpen] = useState(true);

  return (
    <FeaturePanel>
      <PanelHead>
        <h2>Features (12)</h2>
        <button aria-label="Add folder">
          <Icon size={23}>
            <path d="M1 9V3h7l2 3h11v13H10M1 19h3" />
            <path d="M6 8v9M1.500 12.500h9" stroke="#1747ad" strokeWidth="2.200" />
          </Icon>
        </button>
        <button aria-label="Rebuild times"><StopwatchIcon /></button>
      </PanelHead>
      <FilterRow>
        <Icon size={20}><path d="M2 2h18l-7 9v9l-4-3v-6z" strokeWidth="1.600" /></Icon>
        <input placeholder="Filter by name or type" aria-label="Filter by name or type" />
      </FilterRow>
      <FeatureList>
        <li>
          <Fold onClick={() => setGeometryOpen(!geometryOpen)}><ChevronDown size={15} strokeWidth={4} color="#888" />Default geometry</Fold>
          {geometryOpen && (
            <Branch $line>
              <Row $nested>
                <Icon size={18}><circle cx="11" cy="11" r="4.500" /><circle cx="11" cy="11" r="1.500" fill={ink} /></Icon>
                Origin
              </Row>
              {["Top", "Front", "Right"].map((name) => (
                <Row key={name} $nested><PlaneIcon size={18} />{name}</Row>
              ))}
            </Branch>
          )}
        </li>
        {features.map((name) => (
          <Row key={name} $muted={name.startsWith("Sketch")}>
            {name.startsWith("Sketch") ? <SketchIcon size={19} faded /> : <ExtrudeIcon size={19} />}
            {name}
          </Row>
        ))}
      </FeatureList>
      <Fold onClick={() => setPartsOpen(!partsOpen)}><ChevronDown size={15} strokeWidth={4} color="#888" />Parts (1)</Fold>
      {partsOpen && (
        <Branch>
          <Row $nested><PartIcon />Part 1</Row>
        </Branch>
      )}
    </FeaturePanel>
  );
}

function App() {
  return (
    <Page>
      <GlobalStyle />
      <Browser />
      <DocumentHeader />
      <Body>
        <Rail>
          <RailButton aria-label="Feature list">
            <svg width="24" height="22" viewBox="0 0 24 22" fill="none" stroke="#333" strokeWidth="2">
              <circle cx="5" cy="5" r="3.500" />
              <path d="M5 8.500V20M5 17h5q2 0 2-4M13 3h11M15 11h9M13 19h11" />
              <path d="M2 16l3 5 3-3zM9 12l3-2 3 3-3 2z" fill="#333" stroke="none" />
            </svg>
          </RailButton>
          <RailButton aria-label="Versions and history">
            <svg width="22" height="22" viewBox="0 0 22 22" stroke="#333" strokeWidth="2">
              <circle cx="6" cy="10" r="3" fill="#333" />
              <path d="M6 0v6M6 14v8" strokeDasharray="2 1.500" />
              <path d="M16 11v9M11.500 15.500h9" stroke="#1747ad" strokeWidth="2.200" />
            </svg>
          </RailButton>
          <RailButton aria-label="Comments">
            <svg width="24" height="20" viewBox="0 0 24 20" fill="#333">
              <path d="M12 1c6 0 11 3.500 11 8s-5 8-11 8H9q-3 2-7 2 3-2 3-4-4-2-4-6c0-4.500 5-8 11-8z" />
            </svg>
          </RailButton>
          <RailButton aria-label="Performance"><StopwatchIcon speed size={23} /></RailButton>
          <RailButton aria-label="Tab manager" $last>
            <svg width="22" height="20" viewBox="0 0 22 20" fill="none" stroke="#333" strokeWidth="2">
              <path d="M1 2h20v4h-3a7 7 0 00-11 6H1z" fill="#333" stroke="none" />
              <circle cx="13" cy="11" r="4.500" /><path d="M16.500 14.500L21 19" strokeWidth="2.500" />
            </svg>
          </RailButton>
        </Rail>
        <Studio>
          <ToolRow />
          <Main>
            <Features />
            <Viewport>
              <Model />
              <ListToggle aria-label="Toggle feature list">
                <svg width="22" height="22" viewBox="0 0 22 22" fill="none" stroke="#333" strokeWidth="1.300">
                  <path d="M1 1l3 3 3-3M4 6v15M10 2h12M7 8h15M7 14h15M7 20h15" />
                </svg>
              </ListToggle>
              <CubeArea>
                <ViewCube />
                <ViewMenu aria-label="View options"><HouseCube /><Caret /></ViewMenu>
              </CubeArea>
              <SideTabs>
                <button aria-label="Appearances"><SwatchIcon /></button>
                <button aria-label="Configurations"><TableCubeIcon color="#2767d2" /></button>
                <button aria-label="Custom tables"><TableCubeIcon color="#444" braces /></button>
                <button aria-label="Variables"><VariableIcon /></button>
              </SideTabs>
              <MeasureBar>
                <button aria-label="Measure">
                  <svg width="20" height="20" viewBox="0 0 20 20" fill="none" stroke="#333" strokeWidth="1.300">
                    <ellipse cx="13" cy="7" rx="6" ry="4" /><ellipse cx="13" cy="7" rx="2.500" ry="1.500" />
                    <path d="M19 7v7q-1 3-5 3H1v-6h9M4 17v-3M7 17v-3M10 17v-3M13 17v-3" />
                  </svg>
                </button>
                <button aria-label="Angle">
                  <svg width="24" height="20" viewBox="0 0 24 20" fill="none" stroke="#333" strokeWidth="1.400">
                    <path d="M1 17v-3Q2 3 12 3t11 11v3z" /><path d="M7 14q1-5 5-5t5 5h-3q-2-3-4 0z" />
                    <path d="M4 10l2 1M7 6l1 2M12 4v3M17 6l-1 2M20 10l-2 1" />
                  </svg>
                </button>
                <button aria-label="Mass properties">
                  <svg width="18" height="20" viewBox="0 0 18 20" fill="none" stroke="#333" strokeWidth="1.200">
                    <path d="M2 2h14M8 2v13M10 2v13M4 2L1 11h6zM14 2l-3 9h6z" /><path d="M1 17h16" strokeWidth="2" />
                  </svg>
                </button>
              </MeasureBar>
            </Viewport>
          </Main>
          <StudioTabs>
            <AddTab aria-label="Add tab">
              <svg width="18" height="18" viewBox="0 0 18 18" stroke="currentColor" strokeWidth="3"><path d="M9 0v18M0 9h18" /></svg>
            </AddTab>
            <StudioTab $active><PartStudioIcon />Part Studio 1</StudioTab>
            <StudioTab><AssemblyIcon />Assembly 1</StudioTab>
          </StudioTabs>
        </Studio>
      </Body>
    </Page>
  );
}

export default App;
